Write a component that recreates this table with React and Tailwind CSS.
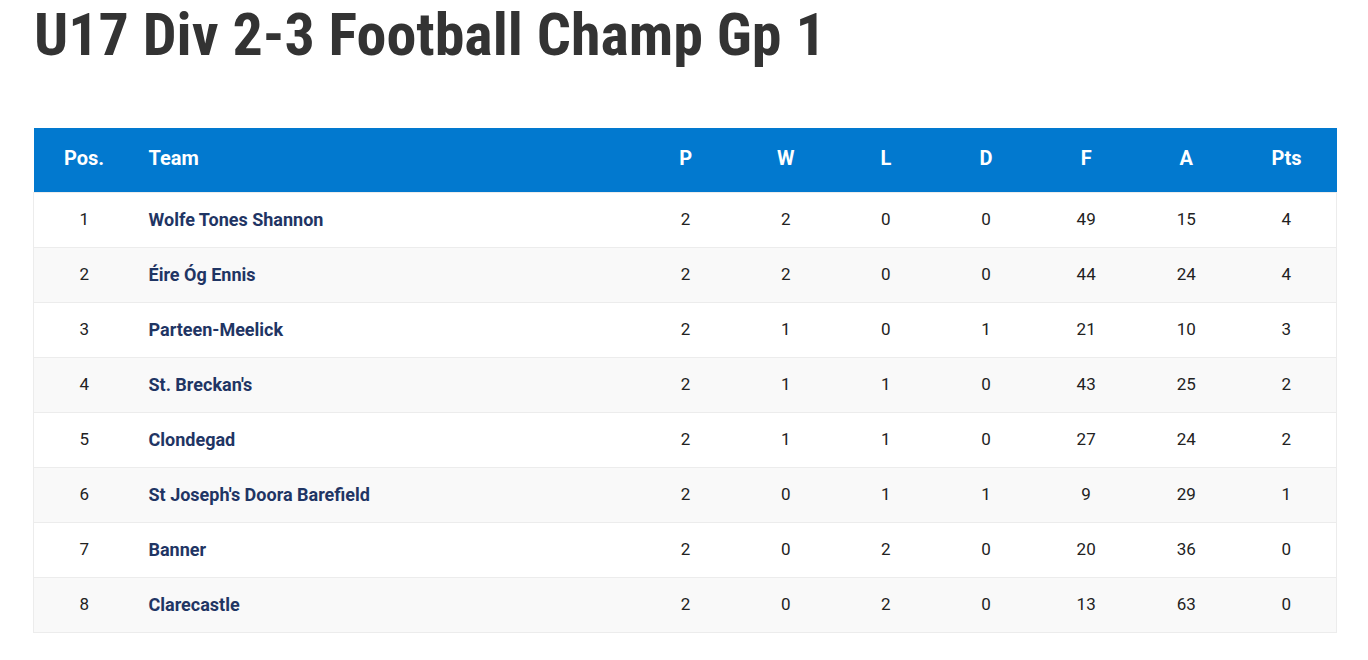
const rows = [
  [1, 'Wolfe Tones Shannon', 2, 2, 0, 0, 49, 15, 4],
  [2, 'Éire Óg Ennis', 2, 2, 0, 0, 44, 24, 4],
  [3, 'Parteen-Meelick', 2, 1, 0, 1, 21, 10, 3],
  [4, "St. Breckan's", 2, 1, 1, 0, 43, 25, 2],
  [5, 'Clondegad', 2, 1, 1, 0, 27, 24, 2],
  [6, "St Joseph's Doora Barefield", 2, 0, 1, 1, 9, 29, 1],
  [7, 'Banner', 2, 0, 2, 0, 20, 36, 0],
  [8, 'Clarecastle', 2, 0, 2, 0, 13, 63, 0],
]

const stats = ['P', 'W', 'L', 'D', 'F', 'A', 'Pts']

export default function App() {
  return (
    <div className="bg-white min-h-screen pl-[33px] pr-[31px] font-['Roboto','Liberation_Sans',sans-serif]">
      <h1 className="pt-[2px] pl-[1px] text-[60px] leading-[66px] font-bold text-[#333] [font-stretch:condensed]">
        U17 Div 2-3 Football Champ Gp 1
      </h1>

      <table className="mt-[60px] w-full border-collapse table-fixed">
        <colgroup>
          <col className="w-[101px]" />
          <col className="w-[501px]" />
          {stats.map((s) => (
            <col key={s} />
          ))}
        </colgroup>
        <thead>
          <tr className="bg-[#0279cf] h-[64px] text-white text-[20px] font-bold">
            <th className="text-center pb-[3px]">Pos.</th>
            <th className="text-left pl-[14px] pb-[3px]">Team</th>
            {stats.map((s) => (
              <th key={s} className="text-center pb-[3px]">{s}</th>
            ))}
          </tr>
        </thead>
        <tbody>
          {rows.map((r, i) => (
            <tr
              key={r[0]}
              className={`h-[55px] border border-[#ececec] text-[17px] ${i % 2 ? 'bg-[#f9f9f9]' : 'bg-white'}`}
            >
              <td className="text-center text-[#222]">{r[0]}</td>
              <td className="pl-[14px] font-bold text-[#1f3564] text-[18px]">{r[1]}</td>
              {r.slice(2).map((v, j) => (
                <td key={j} className="text-center text-[#222]">{v}</td>
              ))}
            </tr>
          ))}
        </tbody>
      </table>
    </div>
  )
}
